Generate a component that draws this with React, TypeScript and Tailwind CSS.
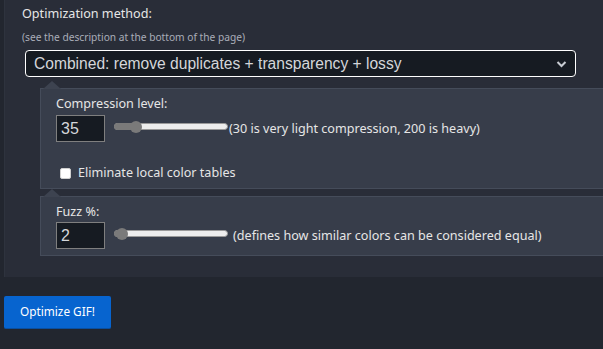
import React from "react";

const font = { fontFamily: '"Noto Sans", "Open Sans", sans-serif' };

function Slider({ pos }: { pos: number }) {
  return (
    <div className="relative w-[114px] h-[12px] shrink-0">
      <div className="absolute left-0 right-0 top-[2px] h-[7px] rounded-full bg-[#ededed] border border-[#9a9a9a]" />
      <div
        className="absolute left-0 top-[2px] h-[7px] rounded-l-full bg-[#7a7a7a]"
        style={{ width: pos }}
      />
      <div
        className="absolute top-0 w-[12px] h-[12px] rounded-full bg-[#7a7a7a]"
        style={{ left: pos - 6 }}
      />
    </div>
  );
}

function Notch() {
  return (
    <div className="absolute left-[2px] top-[-8px] w-0 h-0 border-l-[9px] border-r-[9px] border-b-[8px] border-l-transparent border-r-transparent border-b-[#3d4350]" />
  );
}

export default function App() {
  return (
    <div className="w-[603px] h-[349px] overflow-hidden bg-[#22262f] text-[#e6e6e6]" style={font}>
      <div className="ml-[4px] h-[277px] bg-[#292d38] border-l border-[#2e333e] pl-[17px] pt-[5px]">
        <div className="text-[12.6px] leading-[18px]">Optimization method:</div>
        <div className="text-[10.2px] leading-[14px] mt-[7px] text-[#a9aeb8]">
          (see the description at the bottom of the page)
        </div>
        <div
          className="ml-[3px] mt-[6px] w-[551px] h-[27px] rounded-[4px] border border-white bg-[#161b22] flex items-center justify-between pl-[8px] pr-[8px]"
          style={{ fontFamily: '"Liberation Sans", Arial, sans-serif' }}
        >
          <span className="text-[15.6px] text-[#d4d6da]">Combined: remove duplicates + transparency + lossy</span>
          <svg width="11" height="8" viewBox="0 0 11 8" className="mt-[1px]">
            <path d="M1.5 2 L5.5 6 L9.5 2" stroke="#c8ccd2" strokeWidth="2" fill="none" />
          </svg>
        </div>

        <div className="relative ml-[18px] mt-[11px] h-[101px] bg-[#373d4a] border border-[#454c5a] border-r-0 pl-[15px] pt-[6px]">
          <Notch />
          <div className="text-[12.6px] leading-[18px]">Compression level:</div>
          <div className="flex items-center mt-[2px]">
            <div
              className="w-[49px] h-[27px] bg-[#161b22] border border-[#7f7f7f] flex items-center pl-[4px] text-[16px] text-[#d4d6da]"
              style={{ fontFamily: '"Liberation Sans", Arial, sans-serif' }}
            >
              35
            </div>
            <div className="ml-[9px] mt-[-4px]">
              <Slider pos={22} />
            </div>
            <span className="text-[12.6px] ml-[1px] mt-[2px]">(30 is very light compression, 200 is heavy)</span>
          </div>
          <div className="flex items-center mt-[22px]">
            <div className="ml-[4px] w-[11px] h-[11px] bg-white rounded-[2px] border border-[#cfcfcf]" />
            <span className="ml-[7px] text-[12.6px]">Eliminate local color tables</span>
          </div>
        </div>

        <div className="relative ml-[18px] mt-[7px] h-[60px] bg-[#373d4a] border border-[#454c5a] border-r-0 pl-[15px] pt-[6px]">
          <Notch />
          <div className="text-[12.6px] leading-[18px]">Fuzz %:</div>
          <div className="flex items-center mt-[1px]">
            <div
              className="w-[49px] h-[27px] bg-[#161b22] border border-[#7f7f7f] flex items-center pl-[4px] text-[16px] text-[#d4d6da]"
              style={{ fontFamily: '"Liberation Sans", Arial, sans-serif' }}
            >
              2
            </div>
            <div className="ml-[9px] mt-[-4px]">
              <Slider pos={8} />
            </div>
            <span className="text-[12.6px] ml-[5px] mt-[2px]">(defines how similar colors can be considered equal)</span>
          </div>
        </div>
      </div>

      <button className="ml-[4px] mt-[19px] w-[107px] h-[33px] rounded-[2px] bg-[#0764cf] border-b border-[#0a4fa0] text-white text-[11.8px]">
        Optimize GIF!
      </button>
    </div>
  );
}
